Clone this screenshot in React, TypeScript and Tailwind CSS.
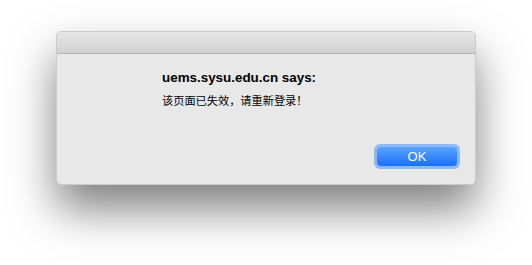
export default function App() {
  return (
    <div className="w-[532px] h-[265px] bg-white pt-[31px] pl-[56px]" style={{ fontFamily: '"Liberation Sans", "Noto Sans CJK SC", sans-serif' }}>
      <div className="w-[420px] h-[154px] rounded-[5px] bg-[#e8e8e8] shadow-[0_24px_45px_rgba(0,0,0,0.5)] flex flex-col overflow-hidden border border-[#cacaca]">
        <div className="h-[22px] shrink-0 bg-gradient-to-b from-[#e6e6e6] to-[#d1d1d1] border-b border-[#b3b3b3]" />
        <div className="flex flex-col pl-[105px] pt-[16px]">
          <div className="text-[13.4px] font-bold text-black leading-[16px]">uems.sysu.edu.cn says:</div>
          <div className="mt-[7px] text-[11.2px] text-black leading-[14px]" style={{ fontFamily: '"Noto Sans CJK SC", sans-serif' }}>该页面已失效，请重新登录！</div>
        </div>
        <div className="flex-1" />
        <div className="flex justify-end pr-[15px] pb-[15px]">
          <div className="rounded-[6px] p-[3px] bg-[#8fb9f5]">
            <button className="w-[80px] h-[19px] rounded-[4px] bg-gradient-to-b from-[#5aa2ff] to-[#1570fb] text-white text-[13px] leading-[19px] flex items-center justify-center">OK</button>
          </div>
        </div>
      </div>
    </div>
  );
}
